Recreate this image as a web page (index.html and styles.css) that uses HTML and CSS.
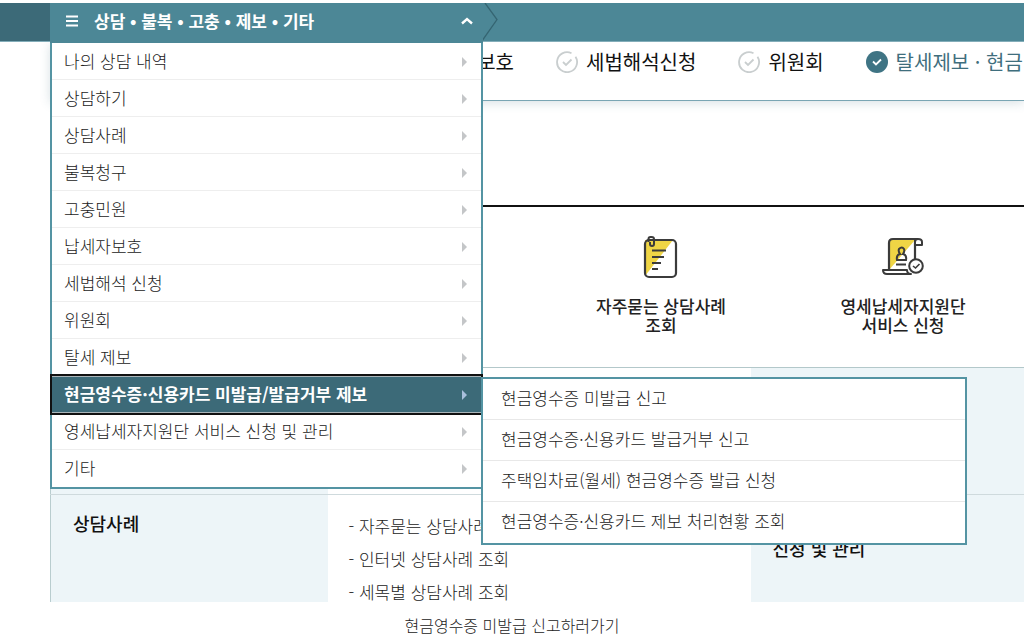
FILE: index.html
```html
<!DOCTYPE html>
<html lang="ko">
<head>
<meta charset="utf-8">
<title>상담 • 불복 • 고충 • 제보 • 기타</title>
<link rel="stylesheet" href="styles.css">
</head>
<body>
<header class="bar">
  <div class="bar-home"></div>
  <nav class="menu">
    <button class="menu-toggle" type="button" aria-expanded="true">
      <svg class="burger" viewBox="0 0 12 12" width="12" height="12"><path d="M0 1.5h12M0 6h12M0 10.5h12" stroke="#fff" stroke-width="2"/></svg>
      <span class="menu-title">상담 • 불복 • 고충 • 제보 • 기타</span>
      <svg viewBox="0 0 12 8" width="12" height="8"><path d="M1 6.5 6 2l5 4.500" fill="none" stroke="#fff" stroke-width="2.400"/></svg>
    </button>
    <ul class="menu-list">
      <li><a href="#">나의 상담 내역</a></li>
      <li><a href="#">상담하기</a></li>
      <li><a href="#">상담사례</a></li>
      <li><a href="#">불복청구</a></li>
      <li><a href="#">고충민원</a></li>
      <li><a href="#">납세자보호</a></li>
      <li><a href="#">세법해석 신청</a></li>
      <li><a href="#">위원회</a></li>
      <li><a href="#">탈세 제보</a></li>
      <li class="open"><a class="active" href="#">현금영수증·신용카드 미발급/발급거부 제보</a>
        <ul class="submenu">
          <li><a href="#">현금영수증 미발급 신고</a></li>
          <li><a href="#">현금영수증·신용카드 발급거부 신고</a></li>
          <li><a href="#">주택임차료(월세) 현금영수증 발급 신청</a></li>
          <li><a href="#">현금영수증·신용카드 제보 처리현황 조회</a></li>
        </ul>
      </li>
      <li><a href="#">영세납세자지원단 서비스 신청 및 관리</a></li>
      <li><a href="#">기타</a></li>
    </ul>
  </nav>
  <svg class="bar-arrow" viewBox="0 0 16 38" width="16" height="38"><path d="M3 0l12 16.500L0 38" fill="none" stroke="#356572" stroke-width="1.300"/></svg>
</header>

<nav class="steps">
  <a href="#"><svg viewBox="0 0 22 22" width="22" height="22"><path d="M15.500 2.200A10 10 0 1 0 19.500 5.800M7 11l3 3 5.500-5.500" fill="none" stroke="#c9cecf" stroke-width="1.800"/></svg>납세자보호</a>
  <a href="#"><svg viewBox="0 0 22 22" width="22" height="22"><path d="M15.500 2.200A10 10 0 1 0 19.500 5.800M7 11l3 3 5.500-5.500" fill="none" stroke="#c9cecf" stroke-width="1.800"/></svg>세법해석신청</a>
  <a href="#"><svg viewBox="0 0 22 22" width="22" height="22"><path d="M15.500 2.200A10 10 0 1 0 19.500 5.800M7 11l3 3 5.500-5.500" fill="none" stroke="#c9cecf" stroke-width="1.800"/></svg>위원회</a>
  <a class="current" href="#"><svg viewBox="0 0 22 22" width="22" height="22"><circle cx="11" cy="11" r="11" fill="#3f7484"/><path d="M7 10.500l3 3 5-5" fill="none" stroke="#fff" stroke-width="1.800"/></svg>탈세제보 · 현금</a>
</nav>

<main>
  <section class="quick">
    <a href="#">
      <svg viewBox="0 0 36 44" width="36" height="44">
        <path d="M2 4h28L2 40z" fill="#efd545"/>
        <rect x="2" y="4" width="31" height="37" rx="4" fill="none" stroke="#3b3b3b" stroke-width="2.200"/>
        <path d="M5.500 6V3q0-2 2-2h1q2.500 0 2.500 2v5q0 2-2 2t-2-2V6" fill="none" stroke="#3b3b3b" stroke-width="2"/>
        <path d="M9 14.500h14M9 21h12M9 27h9M9 33h6" stroke="#3b3b3b" stroke-width="2"/>
      </svg>
      <span>자주묻는 상담사례<br>조회</span>
    </a>
    <a href="#">
      <svg viewBox="0 0 44 44" width="44" height="44">
        <path d="M8 4h26L8 34z" fill="#efd545"/>
        <path d="M8 34V7q0-4 4-4h25q-3 0-3 3v17" fill="none" stroke="#3b3b3b" stroke-width="2.200"/>
        <path d="M37 3q4 0 4 3v3h-7V6q0-3 3-3M8 34H2q0 4 4 4h24q-4 0-4-4z" fill="#fff" stroke="#3b3b3b" stroke-width="2" stroke-linejoin="round"/>
        <path d="M16 24q-1-5 3-6-2-3-1-5 3-3 5 0 1 2-1 5 4 1 3 6z" fill="none" stroke="#3b3b3b" stroke-width="2"/>
        <path d="M15 28.500h10" stroke="#3b3b3b" stroke-width="2"/>
        <circle cx="35" cy="30" r="6.800" fill="#fff" stroke="#3b3b3b" stroke-width="2"/>
        <path d="M32 30l2.500 2 4-4" fill="none" stroke="#3b3b3b" stroke-width="1.600"/>
      </svg>
      <span>영세납세자지원단<br>서비스 신청</span>
    </a>
  </section>

  <table class="sitemap">
    <colgroup><col class="c-head"><col class="c-list"><col></colgroup>
    <tbody>
      <tr class="upper"><th></th><td></td><th></th></tr>
      <tr class="lower">
        <th scope="row">상담사례</th>
        <td>
          <ul>
            <li><a href="#">자주묻는 상담사례 조회</a></li>
            <li><a href="#">인터넷 상담사례 조회</a></li>
            <li><a href="#">세목별 상담사례 조회</a></li>
          </ul>
        </td>
        <th class="second" scope="row">신청 및 관리</th>
      </tr>
    </tbody>
  </table>
</main>
<p class="caption">현금영수증 미발급 신고하러가기</p>
</body>
</html>
```
FILE: styles.css
```css
* { box-sizing: border-box; }
body {
  margin: 0;
  padding-top: 3px;
  background: #fff;
  color: #222;
  font-family: "Noto Sans CJK KR", sans-serif;
  font-size: 17px;
  overflow-x: hidden;
}
a { color: inherit; text-decoration: none; }
ul { list-style: none; margin: 0; padding: 0; }
svg { display: block; flex: none; }

.bar {
  position: relative;
  z-index: 2;
  display: flex;
  height: 39px;
  background: #4c8796;
  border-bottom: 1px solid #83adb9;
}
.bar-home { width: 50px; background: #3c6a78; }
.menu { position: relative; z-index: 2; width: 433px; }
.menu-toggle {
  display: flex;
  align-items: center;
  width: 100%;
  height: 40px;
  padding: 0 10px 5px 16px;
  border: 0;
  background: #4c8796;
  color: #fff;
  font: bold 17px/24px "Noto Sans CJK KR", sans-serif;
}
.menu-title { flex: 1; padding-left: 16px; text-align: left; }
.menu-list {
  border: 2px solid #5494a3;
  border-top: 0;
  background: #fff;
  font-weight: 300;
}
.menu-list li { position: relative; }
.menu-list > li > a {
  display: flex;
  align-items: center;
  justify-content: space-between;
  height: 37px;
  padding: 0 14px 2px 12px;
  border-bottom: 1px solid #eee;
}
.menu-list > li:last-child > a { border-bottom: 0; }
.menu-list > li > a::after {
  content: "";
  margin-top: 3px;
  border: 5px solid transparent;
  border-left-color: #c4c6c8;
  border-right: 0;
}
.menu-list > li > .active {
  background: #3c6a78;
  border: 1px solid #aab5b9;
  border-width: 1px 0;
  color: #fff;
  font-weight: bold;
  outline: 2px solid #111;
}
.menu-list > li > .active::after { border-left-color: #a9bfdc; }
.submenu {
  position: absolute;
  top: 1px;
  left: 100%;
  width: 486px;
  border: 2px solid #5494a3;
  background: #fff;
}
.submenu a {
  display: block;
  height: 41px;
  padding-left: 18px;
  border-bottom: 1px solid #e8e8e8;
  line-height: 38px;
}
.submenu li:last-child a { border-bottom: 0; }
.bar-arrow { margin-left: -1px; }

.steps {
  display: flex;
  gap: 42px;
  height: 59px;
  margin-left: 50px;
  padding: 5px 0 0 342px;
  border-bottom: 1px solid #79a5b3;
  box-shadow: 0 2px 10px rgba(60, 106, 120, 0.2);
  overflow: hidden;
  white-space: nowrap;
  font-size: 20px;
  font-weight: 400;
  line-height: 30px;
}
.steps a { display: flex; gap: 8px; height: 30px; align-items: center; color: #111; }
.steps .current { color: #3f6e7d; }

main { padding-left: 50px; }
.quick {
  display: flex;
  justify-content: flex-end;
  margin-top: 104px;
  height: 162px;
  padding: 29px 0 0;
  border-top: 2px solid #111;
  font-weight: 500;
  line-height: 19px;
  text-align: center;
}
.quick a { display: flex; flex-direction: column; align-items: center; gap: 16px; width: 242px; }

.sitemap {
  width: 100%;
  table-layout: fixed;
  border-collapse: collapse;
  border-left: 1px solid #b9cdcf;
}
.c-head { width: 277px; }
.c-list { width: 423px; }
.sitemap tr { border-top: 1px solid #cfdadd; }
.sitemap .upper { height: 127px; border-color: #b3c8ca; }
.sitemap th {
  padding: 15px 22px 0;
  background: #edf5f8;
  color: #111;
  font-size: 18px;
  font-weight: 500;
  line-height: 26px;
  text-align: left;
  vertical-align: top;
}
.sitemap .second { padding-top: 40px; }
.sitemap td { padding: 14px 21px 0; font-weight: 300; line-height: 33px; vertical-align: top; }
.lower { height: 107px; }
.lower ul { height: 93px; }
.lower li { height: 33px; }
.lower li::before { content: "- "; }
.caption { margin: 11px 0 0; font-size: 16px; font-weight: 300; line-height: 24px; text-align: center; }
```
